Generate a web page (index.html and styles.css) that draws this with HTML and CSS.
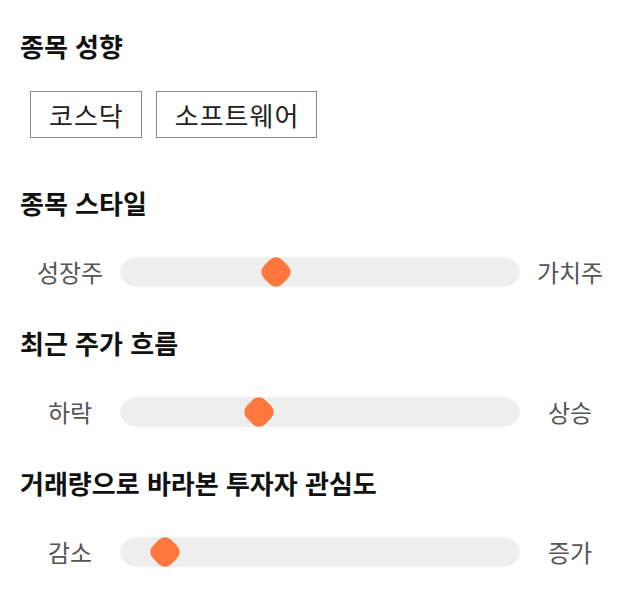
FILE: index.html
```html
<!DOCTYPE html>
<html lang="ko">
<head>
<meta charset="utf-8">
<link rel="stylesheet" href="styles.css">
</head>
<body>
<main class="page">
  <section class="section">
    <h2 class="title">종목 성향</h2>
    <div class="chips">
      <span class="chip">코스닥</span>
      <span class="chip">소프트웨어</span>
    </div>
  </section>
  <section class="section">
    <h2 class="title">종목 스타일</h2>
    <div class="slider-row">
      <span class="label">성장주</span>
      <div class="track"><span class="thumb" style="left: 35.25%"></span></div>
      <span class="label">가치주</span>
    </div>
  </section>
  <section class="section">
    <h2 class="title">최근 주가 흐름</h2>
    <div class="slider-row">
      <span class="label">하락</span>
      <div class="track"><span class="thumb" style="left: 31%"></span></div>
      <span class="label">상승</span>
    </div>
  </section>
  <section class="section">
    <h2 class="title">거래량으로 바라본 투자자 관심도</h2>
    <div class="slider-row">
      <span class="label">감소</span>
      <div class="track"><span class="thumb" style="left: 7.5%"></span></div>
      <span class="label">증가</span>
    </div>
  </section>
</main>
</body>
</html>
```
FILE: styles.css
```css
* { box-sizing: border-box; }
html, body { margin: 0; padding: 0; background: #fff; }
body {
  font-family: "Noto Sans CJK KR", "Noto Sans", sans-serif;
  color: #111;
}
.page {
  padding: 30px 20px 0 20px;
  display: flex;
  flex-direction: column;
}
.section { display: flex; flex-direction: column; }
.section + .section { margin-top: 40px; }
.section:nth-child(2) { margin-top: 49px; }
.title {
  margin: 0;
  font-size: 26px;
  font-weight: 700;
  line-height: 32px;
  height: 32px;
  color: #111;
}
.chips {
  display: flex;
  gap: 14px;
  padding-left: 10px;
  margin-top: 29px;
}
.chip {
  border: 1px solid #8a8a8a;
  height: 47px;
  line-height: 45px;
  padding: 0 17px 0 18px;
  font-size: 26px;
  letter-spacing: 1px;
  color: #222;
}
.slider-row {
  display: grid;
  grid-template-columns: 100px 1fr 100px;
  align-items: center;
  margin-top: 38px;
  height: 30px;
}
.label {
  text-align: center;
  font-size: 24px;
  color: #555;
  line-height: 30px;
}
.track {
  position: relative;
  height: 30px;
  background: #eeeeee;
  border-radius: 18px / 15px;
}
.thumb {
  position: absolute;
  top: 50%;
  width: 26px;
  height: 26px;
  margin-top: -13px;
  margin-left: 2px;
  background: #ff773d;
  border-radius: 9px;
  transform: rotate(45deg);
}
```
